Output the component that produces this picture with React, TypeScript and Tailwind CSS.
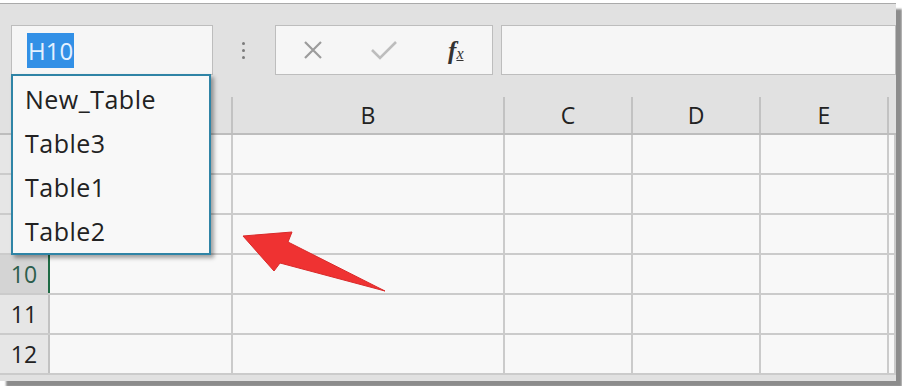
import React from 'react';

/* ============================================================
   Spreadsheet name box dropdown with arrow annotation
   ============================================================ */

const COLS = [
  { key: 'A', w: 'w-[183px]', hidden: true },
  { key: 'B', w: 'w-[272px]' },
  { key: 'C', w: 'w-[128px]' },
  { key: 'D', w: 'w-[128px]' },
  { key: 'E', w: 'w-[128px]' },
];

const ROWS = [7, 8, 9, 10, 11, 12];
const TABLES = ['New_Table', 'Table3', 'Table1', 'Table2'];

function Toolbar() {
  return (
    <div className="flex items-start h-[91px] pt-[21px] pl-[11px]">
      {/* Name box */}
      <div className="w-[202px] h-[50px] bg-[#f6f6f6] border border-[#bdbdbd] flex items-center pl-[15px]">
        <span className="bg-[#3290e6] text-[#e4f1ff] text-[24px] leading-[35px] px-[1px] h-[35px]">H10</span>
      </div>
      {/* Dots */}
      <div className="w-[62px] h-[50px] flex flex-col items-center justify-center gap-[4px] pr-[2px]">
        <span className="w-[3px] h-[3px] rounded-full bg-[#7a7a7a]" />
        <span className="w-[3px] h-[3px] rounded-full bg-[#7a7a7a]" />
        <span className="w-[3px] h-[3px] rounded-full bg-[#7a7a7a]" />
      </div>
      {/* Cancel / enter / function */}
      <div className="w-[218px] h-[50px] bg-[#f6f6f6] border border-[#bdbdbd] flex items-center">
        <div className="w-[73px] flex justify-center pl-[1px]">
          <svg width="22" height="20" viewBox="0 0 22 20">
            <path d="M3 2 L19 18 M19 2 L3 18" stroke="#9c9c9c" strokeWidth="2.2" fill="none" />
          </svg>
        </div>
        <div className="w-[73px] flex justify-center">
          <svg width="28" height="20" viewBox="0 0 28 20">
            <path d="M2 10 L10 18 L26 2" stroke="#bdbdbd" strokeWidth="2.6" fill="none" />
          </svg>
        </div>
        <div className="w-[72px] flex justify-center items-baseline font-['Liberation_Serif',serif] italic text-[#333] pr-[1px]">
          <span className="text-[25px] font-bold leading-none">f</span>
          <span className="text-[16px] leading-none underline decoration-[1px]">x</span>
        </div>
      </div>
      {/* Formula input */}
      <div className="flex-1 h-[50px] ml-[8px] bg-[#f6f6f6] border border-[#bdbdbd]" />
    </div>
  );
}

function HeaderRow() {
  return (
    <div className="flex h-[40px] border-b-2 border-[#bdbdbd]">
      <div className="w-[50px] shrink-0 border-r-2 border-[#c2c2c2] mt-[2px]" />
      {COLS.map((c) => (
        <div
          key={c.key}
          className={`${c.w} shrink-0 border-r-2 border-[#c2c2c2] mt-[2px] flex items-center justify-center text-[23px] text-[#222]`}
        >
          {c.hidden ? null : c.key}
        </div>
      ))}
      <div className="flex-1 mt-[2px]" />
    </div>
  );
}

function GridRow({ n }: { n: number }) {
  const selected = n === 10;
  // rows 7-9 sit under the open dropdown, their labels are not visible
  const covered = n < 10;
  return (
    <div className="flex h-[40px] border-b-2 border-[#cbcbcb]">
      <div
        className={`w-[50px] shrink-0 flex items-center justify-center text-[23px] border-r-2 ${
          selected ? 'bg-[#d4d4d4] text-[#2c5e4c] border-[#1f6b45]' : 'bg-[#e6e6e6] text-[#222] border-[#c2c2c2]'
        }`}
      >
        {covered ? null : n}
      </div>
      {COLS.map((c) => (
        <div key={c.key} className={`${c.w} shrink-0 bg-[#f8f8f8] border-r-2 border-[#cbcbcb]`} />
      ))}
      <div className="flex-1 bg-[#f8f8f8] border-r-2 border-[#cbcbcb]" />
    </div>
  );
}

export default function App() {
  return (
    <div className="w-[902px] h-[386px] bg-white pt-[3px] overflow-hidden font-['Open_Sans','Noto_Sans',sans-serif]">
      <div className="relative w-[896px] h-[378px] bg-[#e1e1e1] border-t border-[#aaaaaa] shadow-[6px_6px_2px_rgba(0,0,0,0.45)]">
        <Toolbar />
        <HeaderRow />
        {ROWS.map((n) => (
          <GridRow key={n} n={n} />
        ))}

        {/* Name box dropdown */}
        <div className="absolute left-[11px] top-[70px] w-[200px] h-[181px] bg-[#f8f8f8] border-2 border-[#2f84a6] shadow-[3px_3px_4px_rgba(0,0,0,0.35)] pt-[1px]">
          {TABLES.map((t) => (
            <div key={t} className="h-[44px] flex items-center pl-[12px] text-[25px] leading-none text-[#222] tracking-[0.5px]">
              {t}
            </div>
          ))}
        </div>

        {/* Annotation arrow */}
        <svg className="absolute left-0 top-[-4px] pointer-events-none" width="896" height="386" viewBox="0 0 896 386">
          <polygon points="243,236 292,232 288,242 385,291 280,263 274,271" fill="#ef3232" stroke="#d92a2a" strokeWidth="1" strokeLinejoin="round" />
        </svg>
      </div>
    </div>
  );
}
